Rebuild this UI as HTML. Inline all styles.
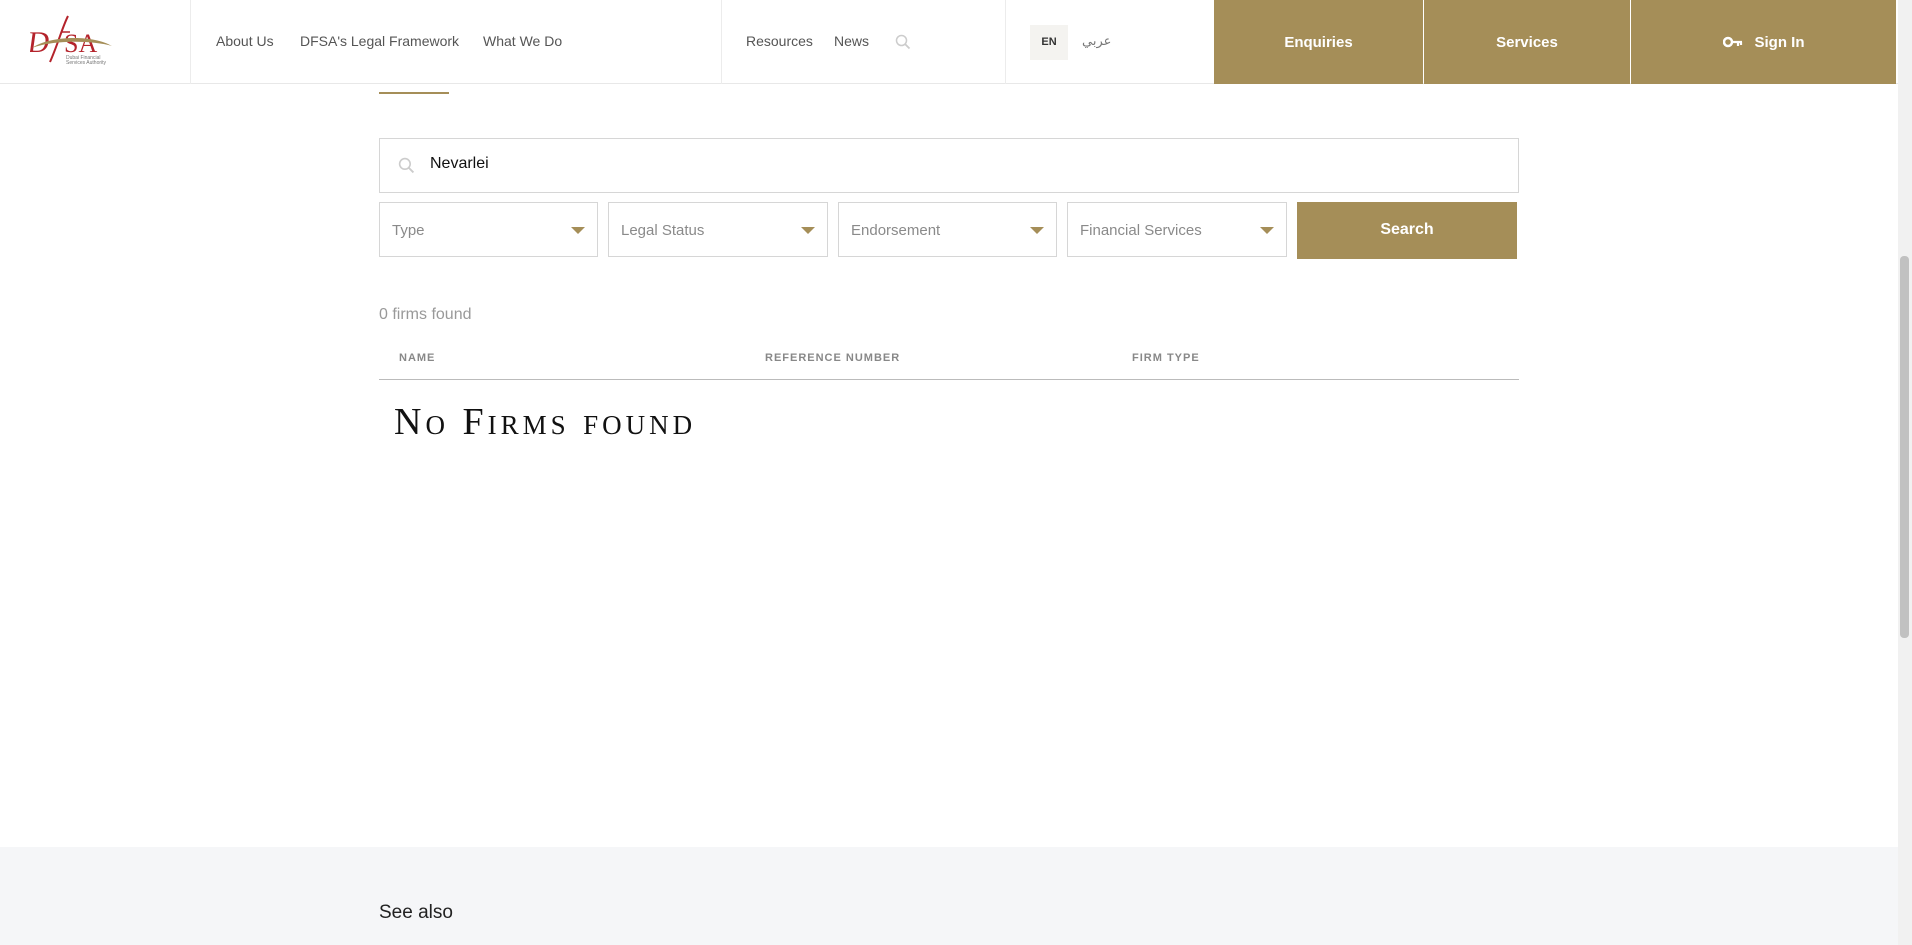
<!DOCTYPE html>
<html><head><meta charset="utf-8"><style>
*{margin:0;padding:0;box-sizing:border-box}
html,body{width:1912px;height:945px;overflow:hidden;background:#fff;font-family:"Liberation Sans",sans-serif}
.hdr{position:absolute;left:0;top:0;width:1898px;height:84px;border-bottom:1px solid #e8e8e8}
.vd{position:absolute;top:0;height:84px;width:1px;background:#ececec}
.nav{position:absolute;top:33px;font-size:14px;color:#555}
.gold{position:absolute;top:0;height:84px;background:#a58e58;color:#fff;font-weight:bold;font-size:15px;display:flex;align-items:center;justify-content:center}
.box{position:absolute;border:1px solid #d6d6d6;background:#fff}
.dd{position:absolute;top:202px;height:55px;border:1px solid #d6d6d6;font-size:15px;color:#8a8a8a;padding:19px 0 0 12px}
.dd:after{content:"";position:absolute;right:12px;top:24px;border-left:7px solid transparent;border-right:7px solid transparent;border-top:7px solid #a58e58}
.th{position:absolute;top:352px;font-size:11px;font-weight:bold;color:#888;letter-spacing:1px}
</style></head><body>
<div class="hdr">
<svg style="position:absolute;left:30px;top:14px" width="84" height="52" viewBox="0 0 84 52">
<text x="2" y="38" font-family="Liberation Serif,serif" font-size="30" fill="#b4232b" transform="skewX(-8)">D</text>
<path d="M38 2 C32 14 28 30 20 48" stroke="#b4232b" stroke-width="2" fill="none"/>
<path d="M32 18 L40 18" stroke="#b4232b" stroke-width="1.5"/>
<text x="34" y="38" font-family="Liberation Serif,serif" font-size="26" fill="#b4232b">SA</text>
<path d="M2 34 C18 22 62 20 82 32 C62 26 22 26 2 34Z" fill="#a58e58"/>
<text x="36" y="45" font-size="5" fill="#777">Dubai Financial</text>
<text x="36" y="50" font-size="5" fill="#777">Services Authority</text>
</svg>
<div class="vd" style="left:190px"></div>
<div class="nav" style="left:216px">About Us</div>
<div class="nav" style="left:300px">DFSA's Legal Framework</div>
<div class="nav" style="left:483px">What We Do</div>
<div class="vd" style="left:721px"></div>
<div class="nav" style="left:746px">Resources</div>
<div class="nav" style="left:834px">News</div>
<svg style="position:absolute;left:895px;top:34px" width="16" height="16" viewBox="0 0 16 16"><circle cx="6.5" cy="6.5" r="5" stroke="#ccc" stroke-width="1.5" fill="none"/><path d="M10 10l4.5 4.5" stroke="#ccc" stroke-width="1.8"/></svg>
<div class="vd" style="left:1005px"></div>
<div style="position:absolute;left:1030px;top:25px;width:38px;height:35px;background:#f4f3f0;font-size:11px;font-weight:bold;color:#333;text-align:center;line-height:35px">EN</div>
<div class="nav" style="left:1082px;top:34px;font-size:13px;color:#777;font-family:'DejaVu Sans',sans-serif">عربي</div>
<div class="gold" style="left:1214px;width:209px">Enquiries</div>
<div class="gold" style="left:1424px;width:206px">Services</div>
<div class="gold" style="left:1631px;width:265px"><svg width="20" height="12" viewBox="0 0 20 12" style="margin-right:12px"><circle cx="5" cy="6" r="4" fill="none" stroke="#fff" stroke-width="2.5"/><path d="M9 6h10M15 6v4M18 6v3" stroke="#fff" stroke-width="2.2"/></svg>Sign In</div>
</div>
<div style="position:absolute;left:1898px;top:0;width:14px;height:945px;background:#f1f1f1"></div>
<div style="position:absolute;left:1900px;top:256px;width:9px;height:382px;background:#c1c1c1;border-radius:4px"></div>
<div style="position:absolute;left:379px;top:92px;width:70px;height:2px;background:#a58e58"></div>
<div class="box" style="left:379px;top:138px;width:1140px;height:55px"></div>
<svg style="position:absolute;left:398px;top:157px" width="17" height="17" viewBox="0 0 16 16"><circle cx="6.5" cy="6.5" r="5" stroke="#ccc" stroke-width="1.5" fill="none"/><path d="M10 10l4.5 4.5" stroke="#ccc" stroke-width="1.8"/></svg>
<div style="position:absolute;left:430px;top:155px;font-size:16px;color:#111">Nevarlei</div>
<div class="dd" style="left:379px;width:219px">Type</div>
<div class="dd" style="left:608px;width:220px">Legal Status</div>
<div class="dd" style="left:838px;width:219px">Endorsement</div>
<div class="dd" style="left:1067px;width:220px">Financial Services</div>
<div style="position:absolute;left:1297px;top:202px;width:220px;height:57px;background:#a58e58;color:#fff;font-weight:bold;font-size:16px;text-align:center;line-height:55px">Search</div>
<div style="position:absolute;left:379px;top:306px;font-size:16px;color:#999">0 firms found</div>
<div class="th" style="left:399px">NAME</div>
<div class="th" style="left:765px">REFERENCE NUMBER</div>
<div class="th" style="left:1132px">FIRM TYPE</div>
<div style="position:absolute;left:379px;top:379px;width:1140px;height:1px;background:#bbb"></div>
<div style="position:absolute;left:394px;top:400px;font-family:'Liberation Serif',serif;font-size:38px;font-variant:small-caps;letter-spacing:4px;color:#111">No Firms found</div>
<div style="position:absolute;left:0;top:847px;width:1898px;height:98px;background:#f5f6f8"></div>
<div style="position:absolute;left:379px;top:902px;font-size:19px;color:#222">See also</div>
</body></html>
